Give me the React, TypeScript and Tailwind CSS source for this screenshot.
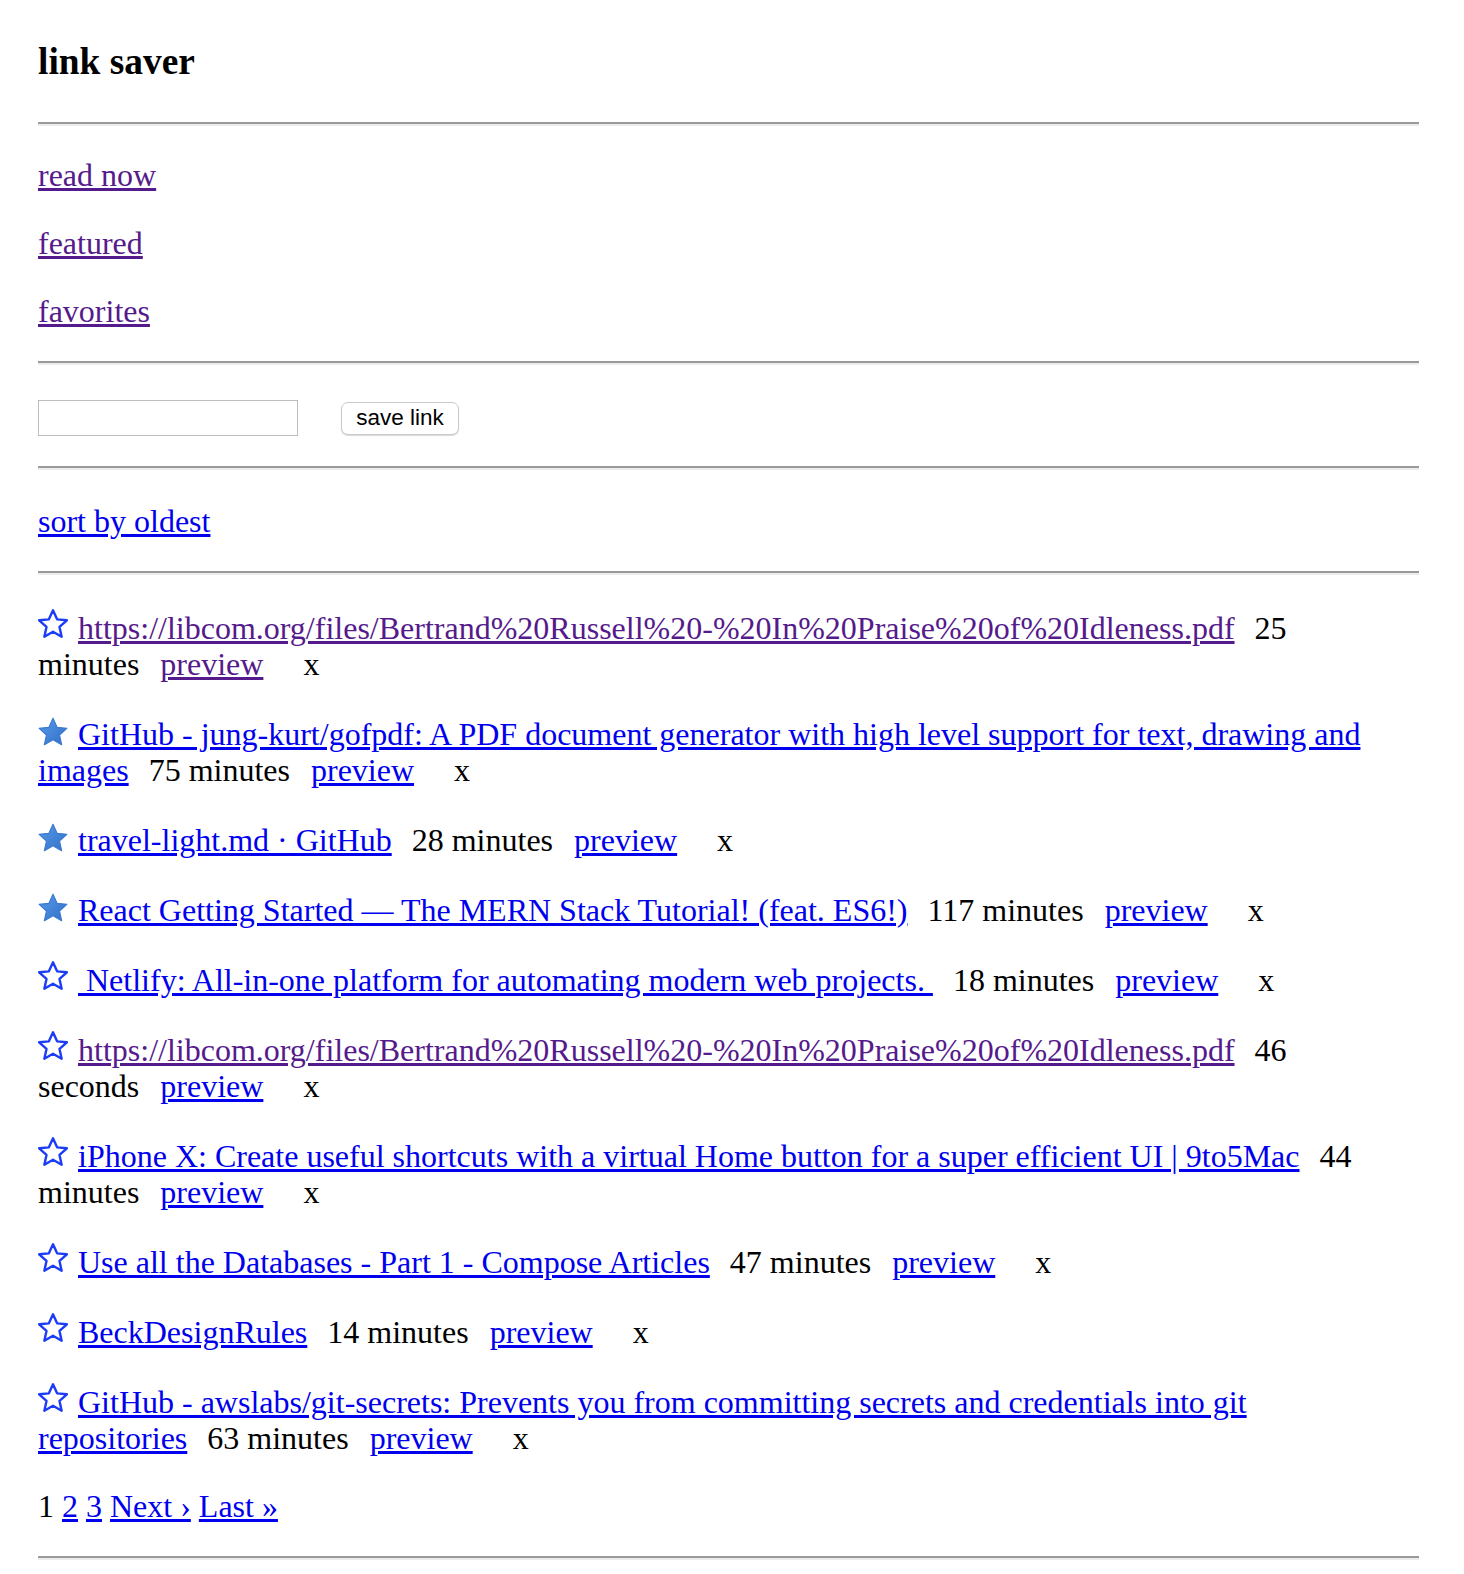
import React from "react";

const BLUE = "text-[#0000ee]";
const PURPLE = "text-[#551a8b]";

function Star({ filled }: { filled: boolean }) {
  const pts =
    "12,2.2 14.9,8.6 21.8,9.3 16.6,14 18.1,20.9 12,17.4 5.9,20.9 7.4,14 2.2,9.3 9.1,8.6";
  return (
    <svg
      width="30"
      height="29"
      viewBox="1.4 1.4 21.2 20.3"
      className={`inline-block mr-[10px] mt-[-12px] ${filled ? "align-[-1px]" : "align-[1px]"}`}
    >
      {filled ? (
        <>
          <defs>
            <linearGradient id="sg" x1="0" y1="0" x2="1" y2="1">
              <stop offset="0" stopColor="#5a9be6" />
              <stop offset="1" stopColor="#2f6fc9" />
            </linearGradient>
          </defs>
          <polygon points={pts} fill="url(#sg)" stroke="#3b78cf" strokeWidth="0.8" strokeLinejoin="round" />
        </>
      ) : (
        <polygon points={pts} fill="none" stroke="#1c3cf5" strokeWidth="1.7" strokeLinejoin="round" />
      )}
    </svg>
  );
}

function Hr() {
  return <div className="h-0 border-t-2 border-t-[#9a9a9a] border-b-2 border-b-[#ececec]" />;
}

type Item = {
  title: string;
  time: string;
  starred: boolean;
  visited?: boolean;
  previewVisited?: boolean;
};

const items: Item[] = [
  {
    title: "https://libcom.org/files/Bertrand%20Russell%20-%20In%20Praise%20of%20Idleness.pdf",
    time: "25 minutes",
    starred: false,
    visited: true,
    previewVisited: true,
  },
  {
    title: "GitHub - jung-kurt/gofpdf: A PDF document generator with high level support for text, drawing and images",
    time: "75 minutes",
    starred: true,
  },
  { title: "travel-light.md · GitHub", time: "28 minutes", starred: true },
  {
    title: "React Getting Started — The MERN Stack Tutorial! (feat. ES6!)",
    time: "117 minutes",
    starred: true,
  },
  {
    title: "\u00a0Netlify: All-in-one platform for automating modern web projects.\u00a0",
    time: "18 minutes",
    starred: false,
  },
  {
    title: "https://libcom.org/files/Bertrand%20Russell%20-%20In%20Praise%20of%20Idleness.pdf",
    time: "46 seconds",
    starred: false,
    visited: true,
  },
  {
    title: "iPhone X: Create useful shortcuts with a virtual Home button for a super efficient UI | 9to5Mac",
    time: "44 minutes",
    starred: false,
  },
  { title: "Use all the Databases - Part 1 - Compose Articles", time: "47 minutes", starred: false },
  { title: "BeckDesignRules", time: "14 minutes", starred: false },
  {
    title: "GitHub - awslabs/git-secrets: Prevents you from committing secrets and credentials into git repositories",
    time: "63 minutes",
    starred: false,
  },
];

export default function App() {
  return (
    <div className="bg-white font-['Liberation_Serif','Times_New_Roman',serif] text-[32px] leading-[36px] text-black pl-[38px] pr-[45px] pt-[40px]">
      <h3 className="text-[37.4px] leading-[43px] font-bold">link saver</h3>
      <div className="mt-[39px]">
        <Hr />
      </div>
      <div className="mt-[31px] flex flex-col gap-[32px] items-start">
        <a href="#" className={`underline ${PURPLE}`}>read now</a>
        <a href="#" className={`underline ${PURPLE}`}>featured</a>
        <a href="#" className={`underline ${PURPLE}`}>favorites</a>
      </div>
      <div className="mt-[32px]">
        <Hr />
      </div>
      <div className="mt-[35px] flex items-center h-[36px]">
        <input type="text" className="w-[260px] h-[36px] border border-[#bdbdbd] bg-white outline-none" />
        <button className="ml-[43px] h-[33px] w-[118px] rounded-[7px] border border-[#cacaca] bg-white shadow-[0_1px_1px_rgba(0,0,0,0.15)] font-['Liberation_Sans',Arial,sans-serif] text-[22.5px] leading-[26px] text-black">
          save link
        </button>
      </div>
      <div className="mt-[30px]">
        <Hr />
      </div>
      <div className="mt-[33px]">
        <a href="#" className={`underline ${BLUE}`}>sort by oldest</a>
      </div>
      <div className="mt-[32px]">
        <Hr />
      </div>
      <div className="mt-[35px] mr-[46px] flex flex-col gap-[34px]">
        {items.map((it, i) => (
          <div key={i}>
            <Star filled={it.starred} />
            <a href="#" className={`underline ${it.visited ? PURPLE : BLUE}`}>{it.title}</a>{" "}
            <span className="ml-[12px]">{it.time}</span>{" "}
            <a href="#" className={`ml-[13px] underline ${it.previewVisited ? PURPLE : BLUE}`}>preview</a>{" "}
            <span className="ml-[32px]">x</span>
          </div>
        ))}
      </div>
      <div className="mt-[32px]">
        <span>1</span>{" "}
        <a href="#" className={`underline ${BLUE}`}>2</a>{" "}
        <a href="#" className={`underline ${BLUE}`}>3</a>{" "}
        <a href="#" className={`underline ${BLUE}`}>Next ›</a>{" "}
        <a href="#" className={`underline ${BLUE}`}>Last »</a>
      </div>
      <div className="mt-[32px]">
        <Hr />
      </div>
    </div>
  );
}
